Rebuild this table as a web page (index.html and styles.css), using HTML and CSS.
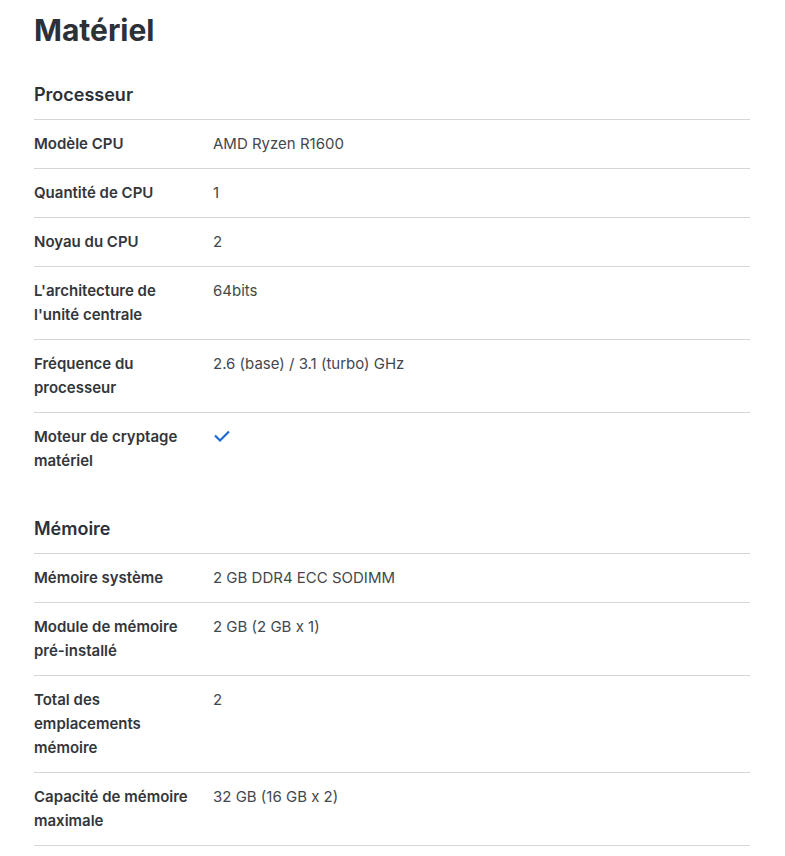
FILE: index.html
```html
<!DOCTYPE html>
<html lang="fr">
<head>
    <meta charset="UTF-8">
    <meta name="viewport" content="width=device-width, initial-scale=1.0">
    <title>Matériel</title>
    <link rel="stylesheet" href="styles.css">
</head>
<body>
    <div id="specs-container">
        <h1>Matériel</h1>

        <div class="spec-section">
            <h2>Processeur</h2>
            <div class="spec-row">
                <div class="spec-label">Modèle CPU</div>
                <div class="spec-value">AMD Ryzen R1600</div>
            </div>
            <div class="spec-row">
                <div class="spec-label">Quantité de CPU</div>
                <div class="spec-value">1</div>
            </div>
            <div class="spec-row">
                <div class="spec-label">Noyau du CPU</div>
                <div class="spec-value">2</div>
            </div>
            <div class="spec-row">
                <div class="spec-label">L'architecture de l'unité centrale</div>
                <div class="spec-value">64bits</div>
            </div>
            <div class="spec-row">
                <div class="spec-label">Fréquence du processeur</div>
                <div class="spec-value">2.6 (base) / 3.1 (turbo) GHz</div>
            </div>
            <div class="spec-row">
                <div class="spec-label">Moteur de cryptage matériel</div>
                <div class="spec-value">
                    <svg class="check" width="18" height="14" viewBox="0 0 18 14">
                        <path d="M2 6.5 L7 11.5 L16 2.5" fill="none" stroke="#1d6bd0" stroke-width="2.2"/>
                    </svg>
                </div>
            </div>
        </div>

        <div class="spec-section">
            <h2>Mémoire</h2>
            <div class="spec-row">
                <div class="spec-label">Mémoire système</div>
                <div class="spec-value">2 GB DDR4 ECC SODIMM</div>
            </div>
            <div class="spec-row">
                <div class="spec-label">Module de mémoire pré-installé</div>
                <div class="spec-value">2 GB (2 GB x 1)</div>
            </div>
            <div class="spec-row">
                <div class="spec-label">Total des emplacements mémoire</div>
                <div class="spec-value">2</div>
            </div>
            <div class="spec-row">
                <div class="spec-label">Capacité de mémoire maximale</div>
                <div class="spec-value">32 GB (16 GB x 2)</div>
            </div>
            <div class="spec-row last-border"></div>
        </div>
    </div>
</body>
</html>
```

FILE: styles.css
```css
body {
    margin: 0;
    font-family: Inter, "Noto Sans", sans-serif;
    color: #2f3237;
    background-color: #ffffff;
}

#specs-container {
    width: 716px;
    padding-left: 34px;
}

h1 {
    font-size: 30px;
    font-weight: 700;
    line-height: 36px;
    margin: 12px 0 0;
    color: #2c3038;
}

h2 {
    font-size: 18px;
    font-weight: 600;
    line-height: 28px;
    margin: 0 0 10px;
    color: #2c3038;
}

.spec-section {
    margin-top: 33px;
}

.spec-section + .spec-section {
    margin-top: 30px;
}

.spec-row {
    display: grid;
    grid-template-columns: 179px 1fr;
    border-top: 1px solid #d6d6d6;
    padding: 12px 0;
    font-size: 15px;
    line-height: 24px;
}

.spec-row.last-border {
    padding: 0;
}

.spec-label {
    font-weight: 600;
    padding-right: 20px;
    color: #33363b;
}

.spec-value {
    color: #44474b;
}

.check {
    display: block;
    margin-top: 4px;
}
```
